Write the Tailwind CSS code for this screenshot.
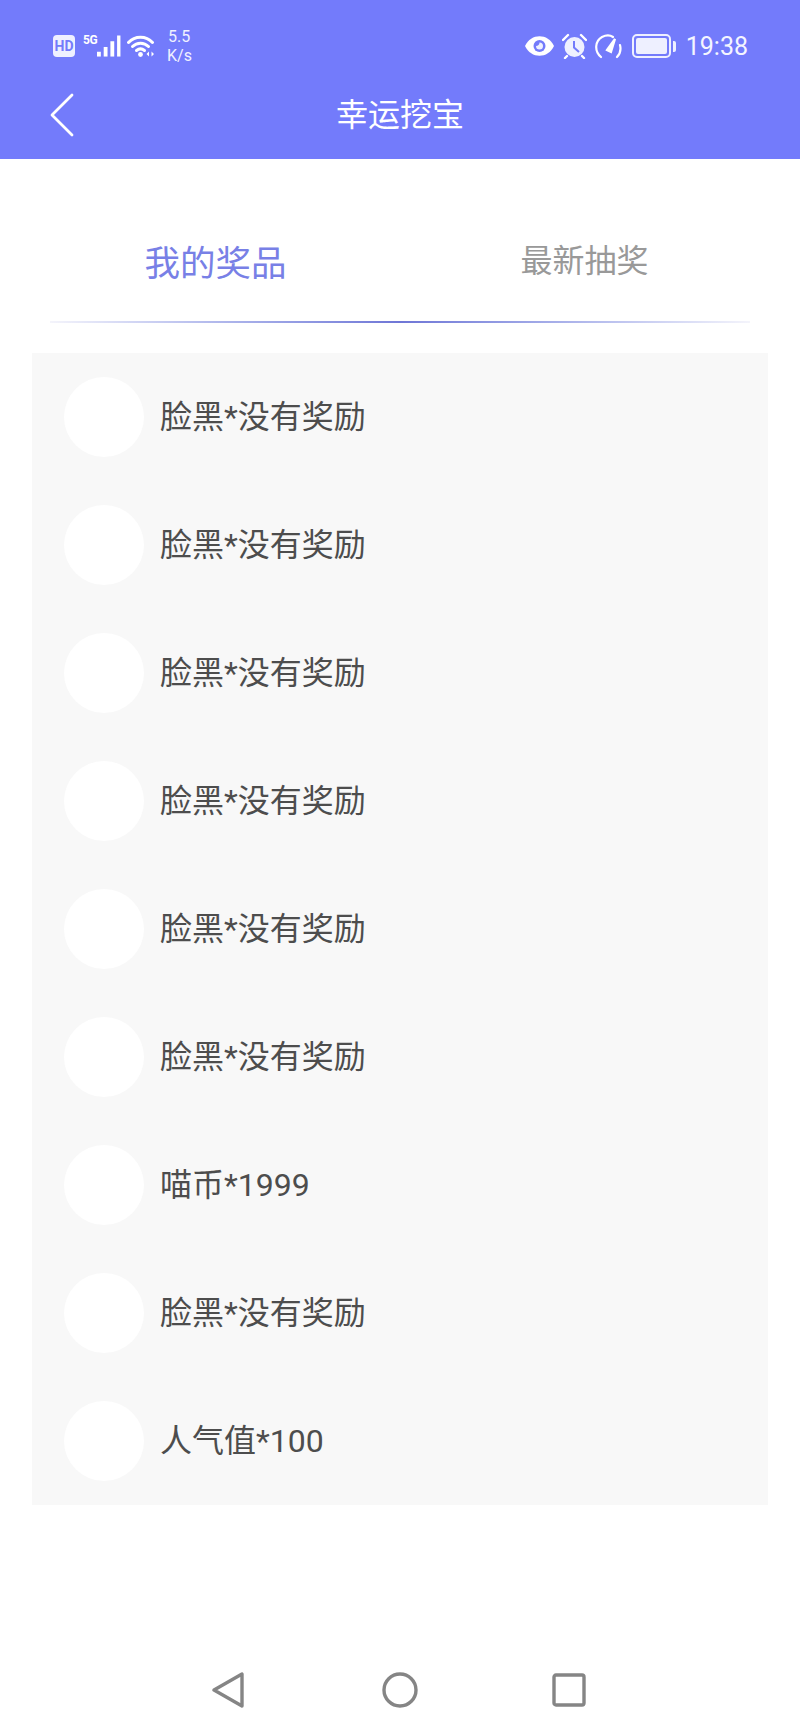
<!DOCTYPE html>
<html lang="en">

<head>
    <meta charset="UTF-8">
    <meta name="viewport" content="width=device-width, initial-scale=1.0">
    <script src="https://cdn.jsdelivr.net/npm/@tailwindcss/browser@4"></script>
    <title>幸运挖宝</title>
</head>

<body class="bg-white font-['Roboto','Noto_Sans_CJK_SC',sans-serif]">
    <div class="w-[800px] h-[1733px] flex flex-col bg-white">
        <!-- header -->
        <header class="h-[159px] bg-[#737bfb] text-white shrink-0">
            <div class="h-[60px] pt-[16px] box-content flex items-center justify-between pl-[53px] pr-[52px]">
                <div class="flex items-center">
                    <span class="w-[22px] h-[22px] rounded-[4px] bg-[#eef0ff] text-[#737bfb] text-[14px] font-bold flex items-center justify-center">HD</span>
                    <div class="flex items-start ml-[8px] w-[38px]">
                        <span class="text-[12px] font-bold leading-[12px] -mt-[1px] tracking-[-0.5px]">5G</span>
                        <svg class="w-[25px] h-[23px]" viewBox="0 0 25 23" fill="white">
                            <rect x="0" y="17" width="4" height="5" />
                            <rect x="7" y="12" width="4" height="10" />
                            <rect x="14" y="6" width="4" height="16" />
                            <rect x="21" y="0" width="3.500" height="22" />
                        </svg>
                    </div>
                    <svg class="w-[29px] h-[24px] ml-[6px]" viewBox="0 0 29 24" fill="none" stroke="white" stroke-width="3" stroke-linecap="round">
                        <path d="M1.5 8.5C8 1.5 19 1.500 25.500 8.500" />
                        <path d="M5.500 12.500C10 8 17 8 21.500 12.500" />
                        <path d="M9.500 16.500C12 14.500 15 14.500 17.500 16.500" />
                        <circle cx="13.500" cy="20.500" r="2.400" fill="white" stroke="none" />
                        <path d="M22 17.500L19.500 20L22 22.500ZM24.500 17.500L27 20L24.500 22.500Z" fill="white" stroke="none" />
                    </svg>
                    <div class="ml-[11px] text-[16px] leading-[19px] text-[#f0f1ff] -mt-[1px]">
                        <div class="pl-[1px]">5.5</div>
                        <div>K/s</div>
                    </div>
                </div>
                <div class="flex items-center">
                    <svg class="w-[29px] h-[20px]" viewBox="0 0 29 20">
                        <path d="M0 10C6-3 23-3 29 10C23 23 6 23 0 10Z" fill="white" />
                        <circle cx="14.500" cy="10" r="6" fill="#737bfb" />
                        <path d="M14.500 6.500A3.500 3.500 0 1 1 11 10C13 10 14.500 8.500 14.500 6.500Z" fill="#eef0ff" />
                    </svg>
                    <svg class="w-[25px] h-[26px] ml-[8px]" viewBox="0 0 25 26">
                        <circle cx="12.500" cy="14" r="10" fill="#eef0ff" />
                        <path d="M12 8V14.500L17 19" fill="none" stroke="#737bfb" stroke-width="2" />
                        <path d="M1 7L6 2M24 7L19 2M5 23L3 25M20 23L22 25" stroke="white" stroke-width="2.400" stroke-linecap="round" />
                    </svg>
                    <svg class="w-[27px] h-[25px] ml-[8px]" viewBox="0 0 27 25" fill="none" stroke="white" stroke-width="2.200" stroke-linecap="round">
                        <path d="M6 23C-1 17 0 7 7 3C11 1 15 1 18 3" />
                        <path d="M25 11C26 15 25 20 22 23" />
                        <path d="M12 16L20 5L16 18Z" fill="white" />
                    </svg>
                    <div class="flex items-center ml-[10px]">
                        <div class="w-[39px] h-[24px] rounded-[5px] border-2 border-[#eef0ff] p-[2px]">
                            <div class="w-full h-full rounded-[2px] bg-[#eef0ff]"></div>
                        </div>
                        <div class="w-[3px] h-[11px] ml-[2px] bg-[#eef0ff] rounded-r-[2px]"></div>
                    </div>
                    <span class="ml-[10px] text-[25px] leading-none text-[#f4f5ff]">19:38</span>
                </div>
            </div>
            <div class="h-[78px] flex items-center relative">
                <svg class="w-[24px] h-[44px] ml-[50px]" viewBox="0 0 24 44" fill="none" stroke="white" stroke-width="2.800" stroke-linecap="round" stroke-linejoin="round">
                    <path d="M22 2L2 22L22 42" />
                </svg>
                <h1 class="absolute inset-x-0 text-center text-[32px] leading-[40px] text-white">幸运挖宝</h1>
            </div>
        </header>

        <!-- tabs -->
        <div class="h-[162px] pt-[81px] px-[31px] flex items-start shrink-0">
            <div class="w-[369px] mt-[4px] text-center text-[35.5px] leading-[40px] text-[#7880e6]">我的奖品</div>
            <div class="w-[369px] mt-[1px] text-center text-[32px] leading-[40px] text-[#999999]">最新抽奖</div>
        </div>
        <div class="h-[2px] mx-[50px] bg-gradient-to-r from-[#f4f4fb] via-[#6f76d6] to-[#f4f4fb] shrink-0"></div>

        <!-- prize list -->
        <ul class="mx-[32px] mt-[30px] py-[24px] bg-[#f8f8f8] flex flex-col gap-[48px] text-[32px] leading-[40px] text-[#4d4d4d]">
            <li class="flex items-center pl-[32px]"><span class="w-[80px] h-[80px] rounded-full bg-white"></span><span class="ml-[16px] -mt-[1px]">脸黑*没有奖励</span></li>
            <li class="flex items-center pl-[32px]"><span class="w-[80px] h-[80px] rounded-full bg-white"></span><span class="ml-[16px] -mt-[1px]">脸黑*没有奖励</span></li>
            <li class="flex items-center pl-[32px]"><span class="w-[80px] h-[80px] rounded-full bg-white"></span><span class="ml-[16px] -mt-[1px]">脸黑*没有奖励</span></li>
            <li class="flex items-center pl-[32px]"><span class="w-[80px] h-[80px] rounded-full bg-white"></span><span class="ml-[16px] -mt-[1px]">脸黑*没有奖励</span></li>
            <li class="flex items-center pl-[32px]"><span class="w-[80px] h-[80px] rounded-full bg-white"></span><span class="ml-[16px] -mt-[1px]">脸黑*没有奖励</span></li>
            <li class="flex items-center pl-[32px]"><span class="w-[80px] h-[80px] rounded-full bg-white"></span><span class="ml-[16px] -mt-[1px]">脸黑*没有奖励</span></li>
            <li class="flex items-center pl-[32px]"><span class="w-[80px] h-[80px] rounded-full bg-white"></span><span class="ml-[16px] -mt-[1px]">喵币*1999</span></li>
            <li class="flex items-center pl-[32px]"><span class="w-[80px] h-[80px] rounded-full bg-white"></span><span class="ml-[16px] -mt-[1px]">脸黑*没有奖励</span></li>
            <li class="flex items-center pl-[32px]"><span class="w-[80px] h-[80px] rounded-full bg-white"></span><span class="ml-[16px] -mt-[1px]">人气值*100</span></li>
        </ul>

        <!-- nav bar -->
        <nav class="mt-auto h-[86px] flex items-center pl-[212px] shrink-0">
            <svg class="w-[32px] h-[36px]" viewBox="0 0 32 36" fill="none" stroke="#858585" stroke-width="3.400" stroke-linejoin="round">
                <path d="M2 18L30 2V34Z" />
            </svg>
            <svg class="w-[36px] h-[36px] ml-[138px]" viewBox="0 0 36 36" fill="none" stroke="#858585" stroke-width="3.400">
                <circle cx="18" cy="18" r="16" />
            </svg>
            <svg class="w-[34px] h-[34px] ml-[134px]" viewBox="0 0 34 34" fill="none" stroke="#858585" stroke-width="3.400" stroke-linejoin="round">
                <rect x="2" y="2" width="30" height="30" rx="2" />
            </svg>
        </nav>
    </div>
</body>

</html>
